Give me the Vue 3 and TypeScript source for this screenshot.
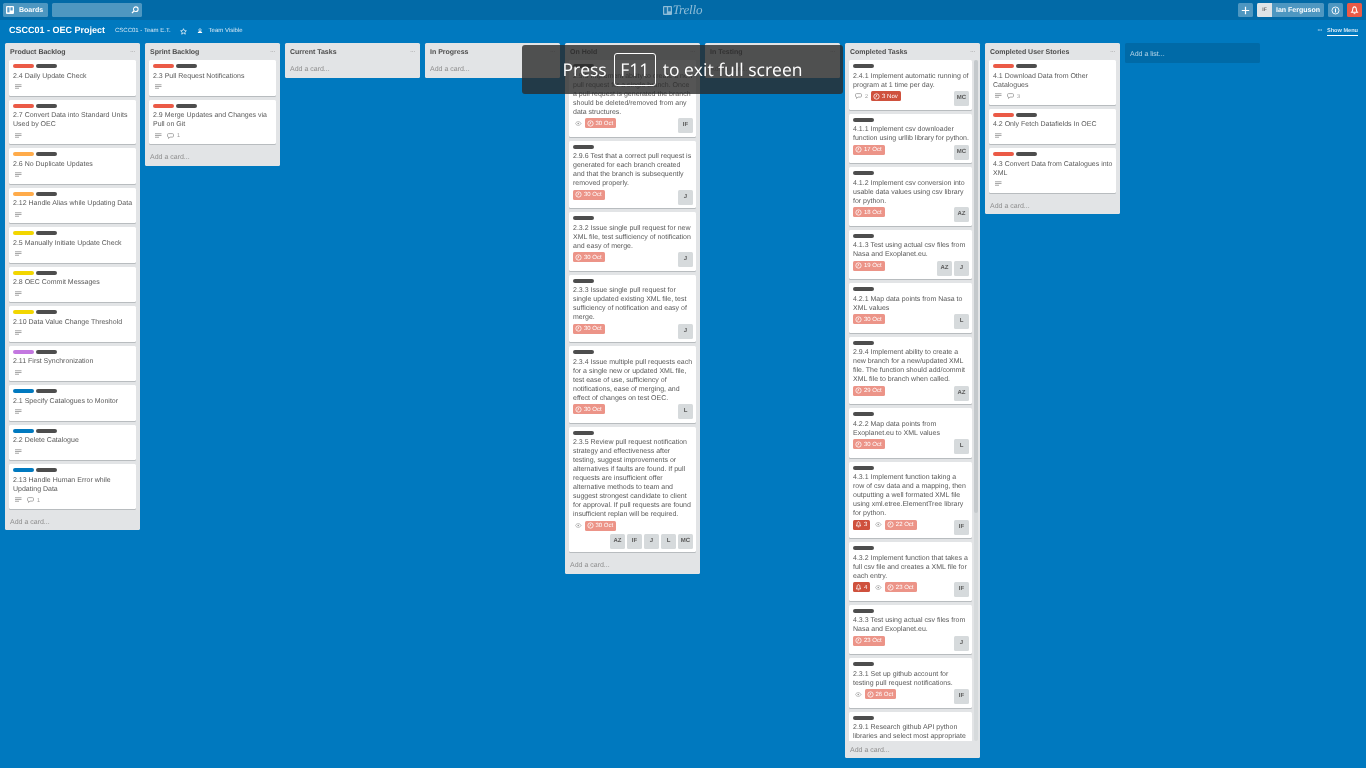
<script setup lang="ts">
type LabelColor = 'red' | 'orange' | 'yellow' | 'purple' | 'blue'

interface Card {
  text: string
  color?: LabelColor
  desc?: boolean
  comments?: number
  watch?: boolean
  bell?: number
  due?: string
  strong?: boolean
  members?: string[]
}

interface List {
  title: string
  cards: Card[]
  scroll?: boolean
}

const story = (text: string, color: LabelColor, comments?: number): Card => ({ text, color, desc: true, comments })

const lists: List[] = [
  {
    title: 'Product Backlog',
    cards: [
      story('2.4 Daily Update Check', 'red'),
      story('2.7 Convert Data into Standard Units\nUsed by OEC', 'red'),
      story('2.6 No Duplicate Updates', 'orange'),
      story('2.12 Handle Alias while Updating Data', 'orange'),
      story('2.5 Manually Initiate Update Check', 'yellow'),
      story('2.8 OEC Commit Messages', 'yellow'),
      story('2.10 Data Value Change Threshold', 'yellow'),
      story('2.11 First Synchronization', 'purple'),
      story('2.1 Specify Catalogues to Monitor', 'blue'),
      story('2.2 Delete Catalogue', 'blue'),
      story('2.13 Handle Human Error while\nUpdating Data', 'blue', 1),
    ],
  },
  {
    title: 'Sprint Backlog',
    cards: [
      story('2.3 Pull Request Notifications', 'red'),
      story('2.9 Merge Updates and Changes via\nPull on Git', 'red', 1),
    ],
  },
  { title: 'Current Tasks', cards: [] },
  { title: 'In Progress', cards: [] },
  {
    title: 'On Hold',
    cards: [
      { text: '2.9.5 Implement ability to create a new\npull request for a single branch. Once\na pull request is generated the branch\nshould be deleted/removed from any\ndata structures.', watch: true, due: '30 Oct', members: ['IF'] },
      { text: '2.9.6 Test that a correct pull request is\ngenerated for each branch created\nand that the branch is subsequently\nremoved properly.', due: '30 Oct', members: ['J'] },
      { text: '2.3.2 Issue single pull request for new\nXML file, test sufficiency of notification\nand easy of merge.', due: '30 Oct', members: ['J'] },
      { text: '2.3.3 Issue single pull request for\nsingle updated existing XML file, test\nsufficiency of notification and easy of\nmerge.', due: '30 Oct', members: ['J'] },
      { text: '2.3.4 Issue multiple pull requests each\nfor a single new or updated XML file,\ntest ease of use, sufficiency of\nnotifications, ease of merging, and\neffect of changes on test OEC.', due: '30 Oct', members: ['L'] },
      { text: '2.3.5 Review pull request notification\nstrategy and effectiveness after\ntesting, suggest improvements or\nalternatives if faults are found. If pull\nrequests are insufficient offer\nalternative methods to team and\nsuggest strongest candidate to client\nfor approval. If pull requests are found\ninsufficient replan will be required.', watch: true, due: '30 Oct', members: ['AZ', 'IF', 'J', 'L', 'MC'] },
    ],
  },
  { title: 'In Testing', cards: [] },
  {
    title: 'Completed Tasks',
    scroll: true,
    cards: [
      { text: '2.4.1 Implement automatic running of\nprogram at 1 time per day.', comments: 2, due: '3 Nov', strong: true, members: ['MC'] },
      { text: '4.1.1 Implement csv downloader\nfunction using urllib library for python.', due: '17 Oct', members: ['MC'] },
      { text: '4.1.2 Implement csv conversion into\nusable data values using csv library\nfor python.', due: '18 Oct', members: ['AZ'] },
      { text: '4.1.3 Test using actual csv files from\nNasa and Exoplanet.eu.', due: '19 Oct', members: ['AZ', 'J'] },
      { text: '4.2.1 Map data points from Nasa to\nXML values', due: '30 Oct', members: ['L'] },
      { text: '2.9.4 Implement ability to create a\nnew branch for a new/updated XML\nfile. The function should add/commit\nXML file to branch when called.', due: '29 Oct', members: ['AZ'] },
      { text: '4.2.2 Map data points from\nExoplanet.eu to XML values', due: '30 Oct', members: ['L'] },
      { text: '4.3.1 Implement function taking a\nrow of csv data and a mapping, then\noutputting a well formated XML file\nusing xml.etree.ElementTree library\nfor python.', bell: 3, watch: true, due: '22 Oct', members: ['IF'] },
      { text: '4.3.2 Implement function that takes a\nfull csv file and creates a XML file for\neach entry.', bell: 4, watch: true, due: '23 Oct', members: ['IF'] },
      { text: '4.3.3 Test using actual csv files from\nNasa and Exoplanet.eu.', due: '23 Oct', members: ['J'] },
      { text: '2.3.1 Set up github account for\ntesting pull request notifications.', watch: true, due: '26 Oct', members: ['IF'] },
      { text: '2.9.1 Research github API python\nlibraries and select most appropriate' },
    ],
  },
  {
    title: 'Completed User Stories',
    cards: [
      story('4.1 Download Data from Other\nCatalogues', 'red', 3),
      story('4.2 Only Fetch Datafields In OEC', 'red'),
      story('4.3 Convert Data from Catalogues into\nXML', 'red'),
    ],
  },
]
</script>

<template>
  <div class="page">
    <header class="topbar">
      <div class="top-left">
        <button class="btn boards">
          <svg class="ico-boards" viewBox="0 0 10 10"><rect width="10" height="10" rx="1.2" fill="#fff" /><rect x="1.6" y="1.6" width="2.8" height="6.4" fill="#5b9cc8" /><rect x="5.6" y="1.6" width="2.8" height="4" fill="#5b9cc8" /></svg>
          <span class="btn-text">Boards</span>
        </button>
        <div class="search">
          <svg viewBox="0 0 10 10" class="ico-search"><circle cx="6" cy="4" r="2.9" fill="none" stroke="#fff" stroke-width="1.3" /><path d="M4 6 1.2 8.8" stroke="#fff" stroke-width="1.5" /></svg>
        </div>
      </div>
      <div class="logo">
        <svg viewBox="0 0 10 10" class="ico-logo"><rect width="10" height="10" rx="1" fill="#fff" /><rect x="1.3" y="1.3" width="3" height="7.2" fill="#2a7fb5" /><rect x="5.7" y="1.3" width="3" height="4.6" fill="#2a7fb5" /></svg>
        <span>Trello</span>
      </div>
      <div class="top-right">
        <button class="btn square plus">
          <svg viewBox="0 0 9 9"><path d="M4.5 0.8v7.4M0.8 4.5h7.4" stroke="#fff" stroke-width="1.2" /></svg>
        </button>
        <button class="btn user"><span class="user-av">IF</span><span class="user-name btn-text">Ian Ferguson</span></button>
        <button class="btn square">
          <svg viewBox="0 0 10 10"><circle cx="5" cy="5" r="3.9" fill="none" stroke="#fff" stroke-width="1" /><path d="M5 2.8v4.4" stroke="#fff" stroke-width="1.2" /></svg>
        </button>
        <button class="btn square alert">
          <svg viewBox="0 0 10 10"><path d="M5 1C3.4 1 3 2.4 3 4c0 1.4-.5 2.2-1.2 3h6.400C7.500 6.200 7 5.400 7 4c0-1.600-.4-3-2-3Z" fill="none" stroke="#fff" stroke-width="1.200" /><path d="M4 8.500h2" stroke="#fff" stroke-width="1" /></svg>
        </button>
      </div>
    </header>

    <div class="titlebar">
      <h1>CSCC01 - OEC Project</h1>
      <span class="team">CSCC01 - Team E.T.</span>
      <svg class="ico-star" viewBox="0 0 10 10"><path d="M5 1l1.200 2.700 2.900.3-2.200 1.900.7 2.900L5 7.300 2.400 8.800l.7-2.900L.9 4l2.900-.3Z" fill="none" stroke="#fff" stroke-width="1" /></svg>
      <svg class="ico-team" viewBox="0 0 10 10"><circle cx="5" cy="3.200" r="2" fill="none" stroke="#fff" stroke-width="1" /><path d="M1.200 8.500c.3-2 1.800-3 3.800-3s3.500 1 3.800 3Z" fill="#fff" /></svg>
      <span class="visible">Team Visible</span>
      <div class="menu">
        <span class="dots">···</span>
        <span class="show">Show Menu</span>
      </div>
    </div>

    <main class="board">
      <section v-for="list in lists" :key="list.title" class="list">
        <div class="list-head">
          <span class="list-title">{{ list.title }}</span>
          <span class="list-more">···</span>
        </div>
        <div class="list-body" :class="{ scroll: list.scroll }">
          <div class="cards">
            <article v-for="card in list.cards" :key="card.text" class="card">
              <div class="labels">
                <i v-if="card.color" class="label" :class="card.color"></i>
                <i class="label dark"></i>
              </div>
              <div class="text">{{ card.text }}</div>
              <div class="foot">
                <div class="badges">
                  <span v-if="card.bell" class="bell">
                    <svg viewBox="0 0 10 10"><path d="M5 1C3.400 1 3 2.400 3 4c0 1.400-.5 2.200-1.200 3h6.400C7.500 6.200 7 5.400 7 4c0-1.600-.4-3-2-3Z" fill="none" stroke="#fff" stroke-width="1.100" /><path d="M4 8.500h2" stroke="#fff" stroke-width="1" /></svg>
                    <span class="t">{{ card.bell }}</span>
                  </span>
                  <span v-if="card.desc" class="plain">
                    <svg class="ico-desc" viewBox="0 0 7 6"><path d="M0 .7h6.500M0 2.500h6.500M0 4.300h4" stroke="#a8a8a8" stroke-width="1.100" /></svg>
                  </span>
                  <span v-if="card.watch" class="plain">
                    <svg class="ico-eye" viewBox="0 0 8 6"><path d="M.5 3C1.500 1.300 2.700.7 4 .7S6.500 1.300 7.500 3C6.500 4.700 5.300 5.300 4 5.300S1.500 4.700.5 3Z" fill="none" stroke="#999" stroke-width=".8" /><circle cx="4" cy="3" r="1" fill="#999" /></svg>
                  </span>
                  <span v-if="card.comments" class="plain comment">
                    <svg class="ico-comment" viewBox="0 0 7 6"><path d="M1.500.6h4c.6 0 1 .4 1 1v1.500c0 .6-.4 1-1 1H3L1.500 5.500V4.100c-.6 0-1-.4-1-1V1.600c0-.6.4-1 1-1Z" fill="none" stroke="#999" stroke-width=".8" /></svg>
                    <span class="t">{{ card.comments }}</span>
                  </span>
                  <span v-if="card.due" class="due" :class="{ strong: card.strong }">
                    <svg viewBox="0 0 10 10"><circle cx="5" cy="5" r="3.800" fill="none" stroke="#fff" stroke-width="1.100" /><path d="M5 2.800V5l-1.800 1" fill="none" stroke="#fff" stroke-width="1" /></svg>
                    <span class="t">{{ card.due }}</span>
                  </span>
                </div>
                <div v-if="card.members" class="members">
                  <span v-for="m in card.members" :key="m" class="avatar">{{ m }}</span>
                </div>
              </div>
            </article>
          </div>
          <div v-if="list.scroll" class="track"><div class="thumb"></div></div>
        </div>
        <div class="add-card">Add a card...</div>
      </section>
      <div class="add-list">Add a list...</div>
    </main>

    <div class="fs-notice">
      <span>Press</span><kbd>F11</kbd><span>to exit full screen</span>
    </div>
  </div>
</template>

<style>
html, body { margin: 0; height: 100%; overflow: hidden; background: #0079bf; }
</style>

<style scoped>
.page {
  position: relative;
  height: 768px;
  width: 1366px;
  overflow: hidden;
  background: #0079bf;
  font-family: "Liberation Sans", Arial, sans-serif;
  font-size: 7px;
  line-height: 9px;
  color: #5a5a5a;
  text-rendering: geometricPrecision;
}
.topbar {
  height: 20px;
  box-sizing: border-box;
  padding: 3px 4px 3px 3px;
  background: #026aa7;
  display: grid;
  grid-template-columns: 1fr auto 1fr;
  align-items: center;
  will-change: transform;
}
.top-left { display: flex; gap: 4px; }
.top-right { display: flex; gap: 4px; justify-content: flex-end; }
.btn {
  height: 14px;
  border: 0;
  padding: 0;
  margin: 0;
  border-radius: 1.5px;
  background: rgba(255, 255, 255, 0.3);
  color: #fff;
  font: bold 7px/14px "Liberation Sans", Arial, sans-serif;
  display: flex;
  align-items: center;
  text-rendering: geometricPrecision;
}
.btn-text { padding-top: 2px; }
.boards { width: 45px; gap: 5px; padding-left: 3px; box-sizing: border-box; }
.ico-boards { width: 8px; height: 8px; }
.search {
  width: 90px;
  height: 14px;
  border-radius: 1.5px;
  background: rgba(255, 255, 255, 0.3);
  display: flex;
  align-items: center;
  justify-content: flex-end;
  padding-right: 3px;
  box-sizing: border-box;
}
.ico-search { width: 8px; height: 8px; }
.logo { display: flex; align-items: center; gap: 1px; opacity: 0.55; color: #fff; }
.ico-logo { width: 9px; height: 9px; }
.logo span { font: italic 13px/14px "Liberation Serif", serif; letter-spacing: -0.2px; }
.square { width: 15px; justify-content: center; }
.square svg { width: 9px; height: 9px; }
.alert { background: #eb5a46; }
.user { width: 67px; overflow: hidden; gap: 4px; }
.user-av {
  width: 15px;
  height: 14px;
  background: #dfe3e6;
  color: #6b6b6b;
  font-size: 5px;
  text-align: center;
  flex: none;
}
.user-name { white-space: nowrap; }

.titlebar {
  height: 23px;
  box-sizing: border-box;
  padding: 0 8px 1px 9px;
  display: flex;
  align-items: center;
  color: #fff;
  will-change: transform;
}
h1 { margin: 0 0 2px; font-size: 9px; line-height: 12px; font-weight: bold; }
.team { margin-left: 10px; font-size: 6px; color: #d5e8f5; }
.ico-star { width: 7px; height: 7px; margin-left: 9.500px; }
.ico-team { width: 6px; height: 6px; margin-left: 9.500px; }
.visible { margin-left: 6px; font-size: 6px; color: #d5e8f5; }
.menu { margin-left: auto; display: flex; align-items: center; gap: 5px; font-size: 5.600px; font-weight: bold; }
.dots { font-size: 6px; letter-spacing: -0.500px; color: #d5e8f5; }
.show { border-bottom: 1px solid #fff; line-height: 7px; color: #d5e8f5; padding-top: 1px; }

.board { display: flex; align-items: flex-start; gap: 5px; padding-left: 5px; will-change: transform; }
.list {
  width: 135px;
  max-height: 715px;
  flex: none;
  background: #e2e4e6;
  border-radius: 1.5px;
  display: flex;
  flex-direction: column;
}
.list-head {
  height: 17px;
  flex: none;
  box-sizing: border-box;
  padding: 4px 5px 0 5px;
  display: flex;
  justify-content: space-between;
}
.list-title { font-weight: bold; padding-top: 0.500px; color: #4d4d4d; }
.list-more { color: #999; font-size: 6px; letter-spacing: -0.300px; padding-top: 1px; }
.list-body { display: flex; min-height: 0; overflow: hidden; flex: 1; }
.cards { flex: 1; min-width: 0; padding: 0 4px; }
.scroll .cards { padding: 0 2px 0 4px; }
.scroll { gap: 0; padding-right: 2px; }
.track { width: 4px; flex: none; background: #d6dadc; border-radius: 2px; align-self: stretch; }
.thumb { height: 453px; background: #c4c9cc; border-radius: 2px; }
.card {
  background: #fff;
  border-radius: 1.5px;
  box-shadow: 0 1px 0 #b8bcbf;
  margin-bottom: 4px;
  padding: 4px 3px 2.500px 4px;
}
.labels { display: flex; gap: 2px; height: 7px; }
.label { display: block; width: 21px; height: 4px; border-radius: 2px; }
.red { background: #eb5a46; }
.orange { background: #ffab4a; }
.yellow { background: #f2d600; }
.purple { background: #c377e0; }
.blue { background: #0079bf; }
.dark { background: #4d4d4d; }
.text { white-space: pre; margin: 0.500px 0 -0.500px; }
.foot { display: flex; flex-wrap: wrap; justify-content: space-between; align-items: flex-start; }
.badges { display: flex; align-items: center; height: 10px; margin: 2px 0 1px; color: #999; font-size: 5.500px; gap: 3px; }
.plain { display: flex; align-items: center; gap: 3px; padding-left: 2px; }
.t { padding-top: 2.500px; }
.ico-desc { width: 7px; height: 6px; }
.ico-eye { width: 6.500px; height: 5px; }
.ico-comment { width: 7px; height: 6px; }
.due, .bell {
  height: 10px;
  box-sizing: border-box;
  display: flex;
  align-items: center;
  gap: 2px;
  padding: 0 3px 0 2px;
  border-radius: 1.5px;
  color: #fff;
  font-size: 6px;
  background: #ec9488;
  white-space: nowrap;
}
.due svg, .bell svg { width: 7px; height: 7px; }
.due.strong, .bell { background: #cf513d; }
.members { display: flex; gap: 2px; margin: 2px 0 1px auto; }
.avatar {
  width: 15px;
  height: 15px;
  border-radius: 1.500px;
  background: #d6dadc;
  color: #5a5a5a;
  font-size: 6px;
  font-weight: bold;
  line-height: 15px;
  text-align: center;
}
.add-card {
  height: 17.500px;
  flex: none;
  box-sizing: border-box;
  padding: 5px 5px 0;
  color: #8c8c8c;
}
.add-list {
  width: 135px;
  height: 20px;
  flex: none;
  box-sizing: border-box;
  padding: 6.500px 5px;
  background: rgba(0, 0, 0, 0.12);
  border-radius: 1.500px;
  color: rgba(255, 255, 255, 0.7);
}
.fs-notice {
  position: absolute;
  left: 522px;
  top: 45px;
  width: 321px;
  height: 49px;
  box-sizing: border-box;
  background: rgba(42, 42, 42, 0.8);
  border-radius: 3px;
  color: #fff;
  font: 17.500px/32px "Open Sans", sans-serif;
  display: flex;
  align-items: center;
  justify-content: center;
  gap: 7px;
}
kbd {
  font: inherit;
  border: 1px solid #fff;
  border-radius: 3px;
  width: 42px;
  height: 33px;
  box-sizing: border-box;
  text-align: center;
}
</style>
